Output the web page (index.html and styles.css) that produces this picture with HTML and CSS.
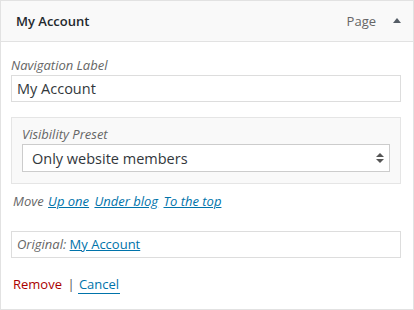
FILE: index.html
```html
<!DOCTYPE html>
<html lang="en">
<head>
    <meta charset="UTF-8">
    <meta name="viewport" content="width=device-width, initial-scale=1.0">
    <title>Menu item</title>
    <link rel="stylesheet" href="styles.css">
</head>
<body>
    <div class="menu-item">
        <div class="item-bar">
            <span class="item-title">My Account</span>
            <span class="item-type">Page</span>
            <span class="item-toggle"></span>
        </div>
        <div class="item-settings">
            <label class="field-label" for="nav-label">Navigation Label</label>
            <input class="text-input" id="nav-label" type="text" value="My Account">

            <div class="visibility">
                <label class="field-label" for="visibility">Visibility Preset</label>
                <div class="select-wrap">
                    <select class="select-input" id="visibility">
                        <option>Only website members</option>
                        <option>Everyone</option>
                        <option>Guests only</option>
                    </select>
                    <span class="select-arrows"></span>
                </div>
            </div>

            <div class="move-row">
                <span class="move-label">Move</span>
                <a href="#">Up one</a>
                <a href="#">Under blog</a>
                <a href="#">To the top</a>
            </div>

            <div class="original">
                <span class="original-label">Original:</span>
                <a href="#">My Account</a>
            </div>

            <div class="actions">
                <a href="#" class="remove">Remove</a>
                <span class="sep">|</span>
                <a href="#" class="cancel">Cancel</a>
            </div>
        </div>
    </div>
</body>
</html>
```

FILE: styles.css
```css
* {
    margin: 0;
    padding: 0;
    box-sizing: border-box;
}

body {
    font-family: 'Open Sans', 'Liberation Sans', sans-serif;
    font-size: 13px;
    color: #444;
    background: #fff;
}

.menu-item {
    width: 414px;
    height: 310px;
    border: 1px solid #e2e2e2;
    background: #fff;
}

.item-bar {
    display: flex;
    align-items: center;
    height: 41px;
    padding: 0 12px 0 15px;
    background: #f9f9f9;
    border-bottom: 1px solid #e2e2e2;
    line-height: 40px;
}

.item-title {
    flex: 1;
    font-size: 13px;
    font-weight: 600;
    color: #23282d;
}

.item-type {
    color: #666;
    font-size: 13px;
    margin-right: 17px;
}

.item-toggle {
    width: 0;
    height: 0;
    border-left: 4px solid transparent;
    border-right: 4px solid transparent;
    border-bottom: 5px solid #555d66;
    margin-top: -2px;
}

.item-settings {
    padding: 14px 12px 0 10px;
}

.field-label {
    display: block;
    font-style: italic;
    color: #666;
    line-height: 19px;
}

.text-input {
    display: block;
    width: 390px;
    height: 27px;
    padding: 0 5px;
    border: 1px solid #ddd;
    font-family: inherit;
    font-size: 14.5px;
    color: #32373c;
    outline: none;
}

.visibility {
    margin-top: 15px;
    padding: 7px 9px 11px 10px;
    background: #f9f9f9;
    border: 1px solid #e5e5e5;
}

.select-wrap {
    position: relative;
}

.select-input {
    display: block;
    width: 368px;
    height: 28px;
    padding: 0 9px;
    border: 1px solid #ccc;
    border-radius: 0;
    background: #fff;
    font-family: inherit;
    font-size: 14.5px;
    color: #32373c;
    appearance: none;
    -webkit-appearance: none;
    outline: none;
}

.select-arrows {
    position: absolute;
    right: 7px;
    top: 9px;
    width: 8px;
    height: 10px;
    pointer-events: none;
}

.select-arrows::before,
.select-arrows::after {
    content: '';
    position: absolute;
    left: 0;
    border-left: 4px solid transparent;
    border-right: 4px solid transparent;
}

.select-arrows::before {
    top: 0;
    border-bottom: 4px solid #555;
}

.select-arrows::after {
    bottom: 0;
    border-top: 4px solid #555;
}

a {
    color: #0073aa;
    text-decoration: underline;
}

.move-row {
    margin-top: 8px;
    padding-left: 2px;
    line-height: 19px;
    font-style: italic;
}

.move-label {
    color: #666;
    margin-right: 1px;
}

.move-row a {
    margin-right: 2px;
}

.original {
    margin-top: 20px;
    width: 390px;
    padding: 3px 5px;
    border: 1px solid #ddd;
    line-height: 19px;
}

.original-label {
    font-style: italic;
    color: #666;
}

.actions {
    margin-top: 17px;
    padding-left: 2px;
    line-height: 19px;
}

.remove {
    color: #a00;
    text-decoration: none;
}

.sep {
    color: #555;
    margin-left: 2px;
}

.cancel {
    text-decoration: none;
    padding: 0 1px;
    border-bottom: 1px solid #0073aa;
}
```
